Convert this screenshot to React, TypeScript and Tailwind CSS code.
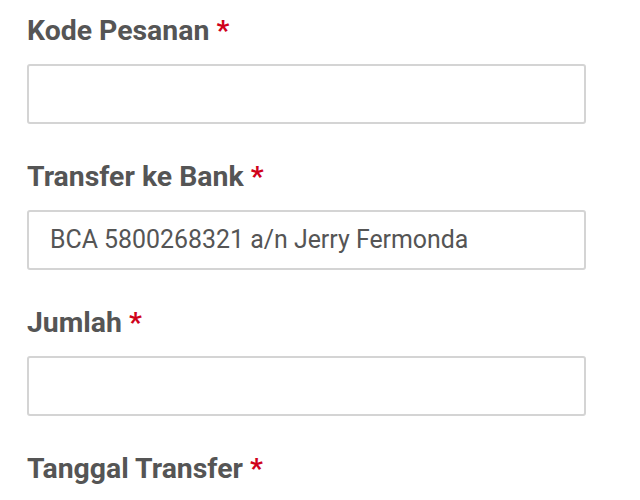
import React from "react";

const fields = [
  { label: "Kode Pesanan", value: "" },
  { label: "Transfer ke Bank", value: "BCA 5800268321 a/n Jerry Fermonda" },
  { label: "Jumlah", value: "" },
];

export default function App() {
  return (
    <div
      className="w-[640px] h-[500px] overflow-hidden bg-white pt-[14px] pl-[27px]"
      style={{ fontFamily: "Roboto, 'Liberation Sans', sans-serif" }}
    >
      {fields.map((f) => (
        <div key={f.label} className="mb-[36px]">
          <div className="text-[28.4px] leading-[34px] font-bold text-[#555555] mb-[16px]">
            {f.label} <span className="text-[#d0021b]">*</span>
          </div>
          <div className="w-[559px] h-[60px] border-2 border-[#d4d4d4] rounded-[3px] flex items-center pl-[21px] text-[24.9px] text-[#555555]">
            {f.value}
          </div>
        </div>
      ))}
      <div className="text-[28.4px] leading-[34px] font-bold text-[#555555]">
        Tanggal Transfer <span className="text-[#d0021b]">*</span>
      </div>
    </div>
  );
}
